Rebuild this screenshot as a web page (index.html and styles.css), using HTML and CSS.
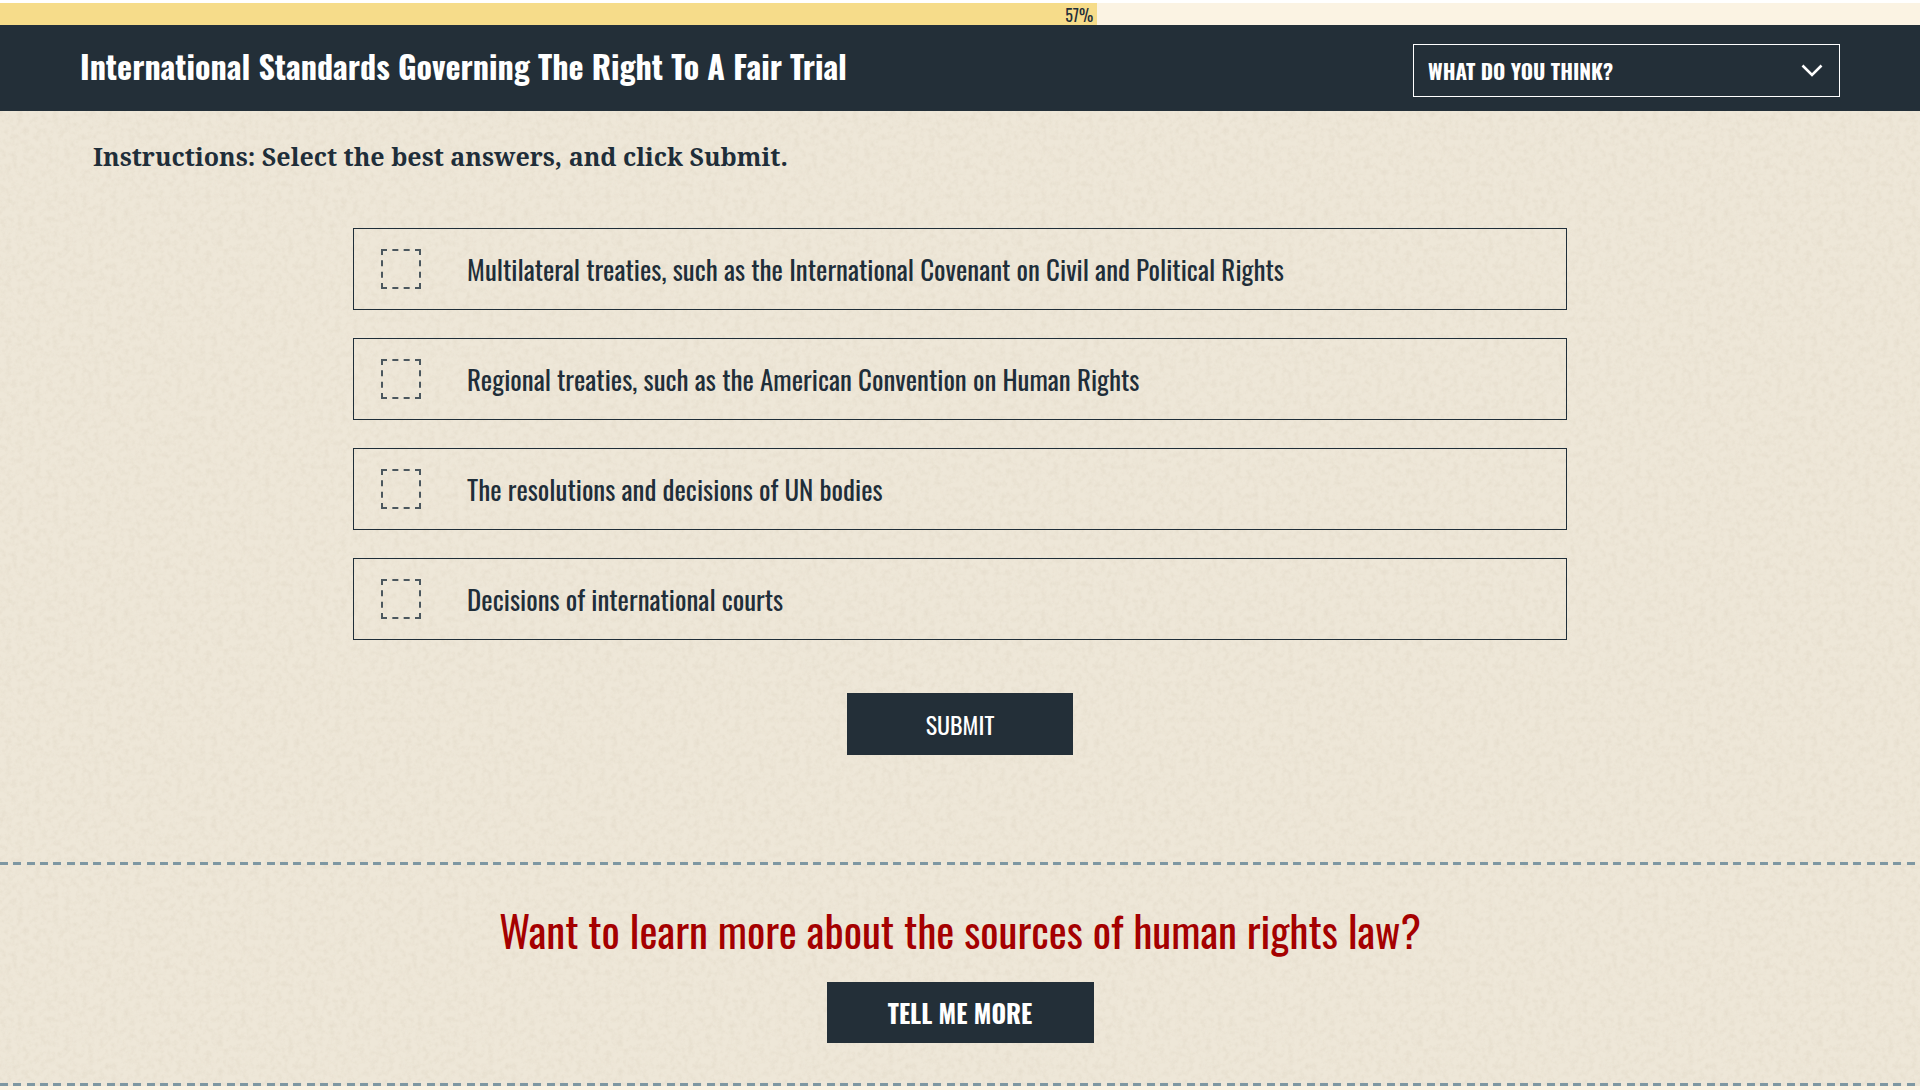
FILE: index.html
```html
<!DOCTYPE html>
<html lang="en">

<head>
    <meta charset="UTF-8">
    <meta name="viewport" content="width=device-width, initial-scale=1.0">
    <title>International Standards Governing The Right To A Fair Trial</title>
    <link rel="stylesheet" href="styles.css">
</head>

<body>
    <div class="progress">
        <div class="progress-bar" style="width: 57.15%">57%</div>
    </div>

    <header class="header">
        <h1>International Standards Governing The Right To A Fair Trial</h1>
        <select class="menu" aria-label="Page menu">
            <option>WHAT DO YOU THINK?</option>
        </select>
    </header>

    <main class="content">
        <form class="quiz">
            <p class="instructions">Instructions: Select the best answers, and click Submit.</p>
            <div class="options">
                <label class="option" for="multilateral">
                    <input type="checkbox" id="multilateral">
                    <span>Multilateral treaties, such as the International Covenant on Civil and Political Rights</span>
                </label>
                <label class="option" for="regional">
                    <input type="checkbox" id="regional">
                    <span>Regional treaties, such as the American Convention on Human Rights</span>
                </label>
                <label class="option" for="resolutions">
                    <input type="checkbox" id="resolutions">
                    <span>The resolutions and decisions of UN bodies</span>
                </label>
                <label class="option" for="courts">
                    <input type="checkbox" id="courts">
                    <span>Decisions of international courts</span>
                </label>
            </div>
            <button type="button" class="submit">SUBMIT</button>
        </form>

        <section class="more">
            <h2>Want to learn more about the sources of human rights law?</h2>
            <button type="button" class="tell-more">TELL ME MORE</button>
        </section>
    </main>
</body>

</html>
```

FILE: styles.css
```css
* {
  box-sizing: border-box;
}
body {
  margin: 0;
  padding-top: 3px;
  background-color: #fff;
  color: #1f2e39;
  font-family: Oswald, "Roboto Condensed", sans-serif;
}
.progress {
  height: 22px;
  background-color: #fbf3e3;
}
.progress-bar {
  height: 100%;
  padding-right: 4px;
  background-color: #f6dc8a;
  font-size: 16px;
  line-height: 24px;
  text-align: right;
}
.header {
  display: flex;
  justify-content: space-between;
  align-items: center;
  min-height: 86px;
  padding: 5px 80px 0;
  background-color: #232f38;
  color: #fff;
}
h1 {
  margin: 0 0 10px;
  font-size: 32px;
  font-weight: 700;
  line-height: 48px;
}
.menu {
  appearance: none;
  width: 427px;
  height: 53px;
  padding: 0 14px;
  border: 1px solid #fff;
  border-radius: 0;
  background: url("data:image/svg+xml,%3Csvg xmlns='http://www.w3.org/2000/svg' width='22' height='14'%3E%3Cpath d='M1.5 1.5 L11 11 L20.5 1.5' fill='none' stroke='white' stroke-width='2.6'/%3E%3C/svg%3E") no-repeat right 16px center;
  color: #fff;
  font-family: inherit;
  font-size: 21px;
  font-weight: 700;
}
.menu option {
  background-color: #232f38;
}
/* paper grain */
.content {
  border-bottom: 4px solid #fbf3e3;
  background-color: #eee7d8;
  background-image: url("data:image/svg+xml,%3Csvg xmlns='http://www.w3.org/2000/svg' width='400' height='400'%3E%3Cfilter id='n' x='0' y='0' width='100%25' height='100%25'%3E%3CfeTurbulence type='fractalNoise' baseFrequency='0.17' numOctaves='4' seed='4' stitchTiles='stitch'/%3E%3CfeColorMatrix values='0 0 0 0 0.5 0 0 0 0 0.42 0 0 0 0 0.3 0.3 0 0 0 -0.12'/%3E%3C/filter%3E%3Crect width='400' height='400' filter='url(%23n)'/%3E%3C/svg%3E");
}
.quiz {
  display: flex;
  flex-direction: column;
  align-items: center;
  padding: 27px 93px 107px;
}
.instructions {
  align-self: flex-start;
  margin: 0 0 54px;
  font-family: "Noto Serif", serif;
  font-size: 25px;
  font-weight: 700;
  line-height: 36px;
}
.options {
  display: flex;
  flex-direction: column;
  gap: 28px;
  width: 70%;
  margin-bottom: 53px;
}
.option {
  display: flex;
  align-items: center;
  gap: 46px;
  min-height: 82px;
  padding: 0 27px;
  border: 1px solid #1f2e39;
  font-size: 27px;
  line-height: 40px;
  cursor: pointer;
}
.option input {
  appearance: none;
  flex: none;
  width: 40px;
  height: 40px;
  margin: 0;
  border: 2px dashed #4b575e;
}
.option input:checked {
  background-color: #1f2e39;
}
button {
  border: none;
  background-color: #232f38;
  color: #fff;
  font-family: inherit;
  cursor: pointer;
}
.submit {
  width: 226px;
  height: 62px;
  font-size: 24px;
  font-weight: 400;
}
/* dashed rules above and below */
.more {
  display: flex;
  flex-direction: column;
  align-items: center;
  padding: 36px 0 43px;
  background:
    repeating-linear-gradient(90deg, #7e97a2 0 8px, transparent 8px calc(100% / 144)) top / 100% 3px no-repeat,
    repeating-linear-gradient(90deg, #7e97a2 0 8px, transparent 8px calc(100% / 144)) bottom / 100% 3px no-repeat;
}
h2 {
  margin: 0 0 20px;
  color: #a50000;
  font-size: 43px;
  font-weight: 400;
  line-height: 64px;
}
.tell-more {
  width: 267px;
  height: 61px;
  font-size: 25px;
  font-weight: 700;
}
```
